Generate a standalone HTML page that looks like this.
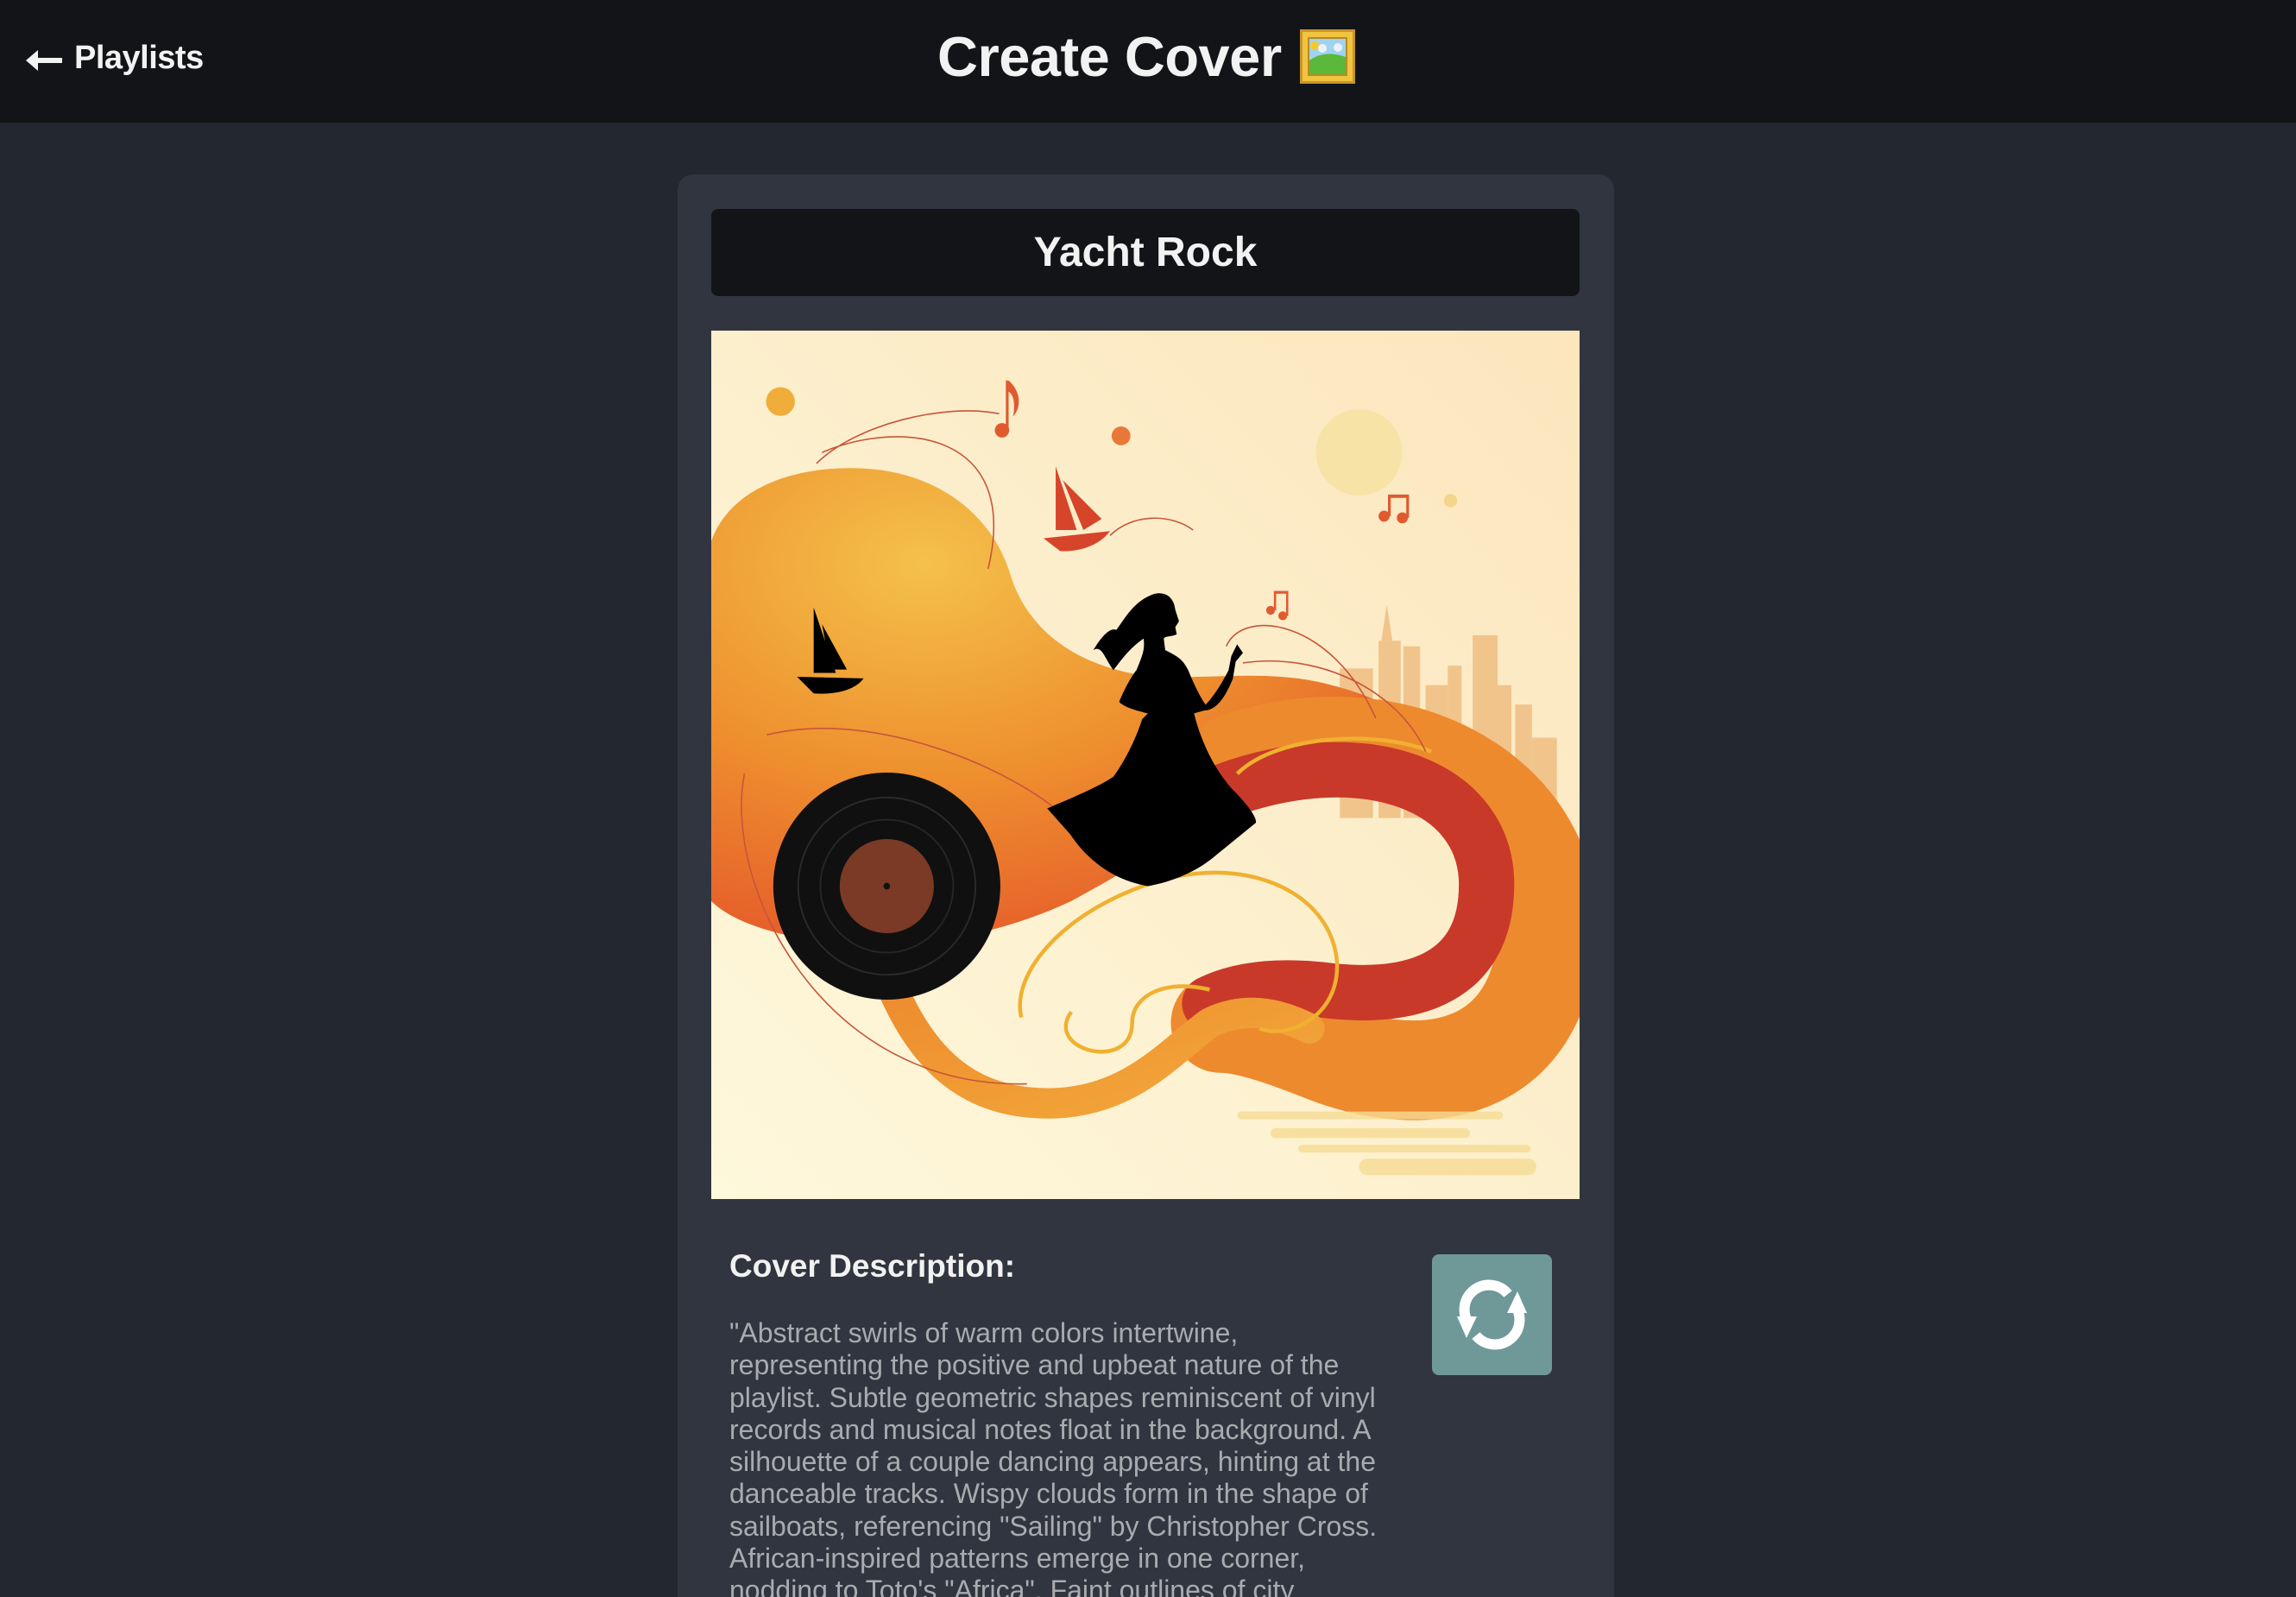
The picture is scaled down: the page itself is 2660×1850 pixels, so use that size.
<!DOCTYPE html>
<html><head><meta charset="utf-8"><style>
*{margin:0;padding:0;box-sizing:border-box}
html,body{width:2660px;height:1850px;overflow:hidden;background:#23272f;font-family:"Liberation Sans",sans-serif;position:relative}
.hdr{position:absolute;left:0;top:0;width:2660px;height:142px;background:#131418}
.back{position:absolute;left:86px;top:46px;color:#f2f2f2;font-weight:bold;font-size:38px;letter-spacing:-0.5px}
.arrow{position:absolute;left:30px;top:56px;width:44px;height:28px}
.title{position:absolute;left:1086px;top:28px;color:#f2f2f2;font-weight:bold;font-size:65px;letter-spacing:-0.5px}
.frame{position:absolute;left:1506px;top:34px;width:64px;height:63px}
.card{position:absolute;left:785px;top:202px;width:1085px;height:1648px;background:#31353f;border-radius:18px 18px 0 0}
.tbar{position:absolute;left:824px;top:242px;width:1006px;height:101px;background:#131418;border-radius:8px;color:#f2f2f2;font-weight:bold;font-size:48px;text-align:center;line-height:101px}
.img{position:absolute;left:824px;top:383px;width:1006px;height:1006px}
.h2{position:absolute;left:845px;top:1446px;color:#f2f2f2;font-weight:bold;font-size:37px}
.desc{position:absolute;left:845px;top:1526px;color:#a9abaf;font-size:32px;line-height:37.3px;white-space:nowrap;letter-spacing:0}
.btn{position:absolute;left:1659px;top:1453px;width:139px;height:140px;background:#6f9899;border-radius:8px}
</style></head><body>
<div class="hdr">
<svg class="arrow" viewBox="0 0 44 28"><path d="M4,14 H42" stroke="#f2f2f2" stroke-width="6"/><path d="M0,14 L14,2 L14,26Z" fill="#f2f2f2"/></svg>
<div class="back">Playlists</div>
<div class="title">Create Cover</div>
<svg class="frame" viewBox="0 0 64 63"><rect x="0" y="0" width="64" height="63" fill="#c9962a"/><rect x="3" y="3" width="58" height="57" fill="#f1c440"/><rect x="9" y="9" width="46" height="45" fill="#b98a22"/><rect x="11" y="11" width="42" height="41" fill="#9fd3ee"/><path d="M11,36 C22,28 36,26 53,32 L53,52 L11,52Z" fill="#5cb83a"/><circle cx="17" cy="19" r="5" fill="#f5c928"/><circle cx="26" cy="22" r="5" fill="#eef2f6"/><circle cx="44" cy="21" r="5" fill="#eef2f6"/></svg>
</div>
<div class="card"></div>
<div class="tbar">Yacht Rock</div>
<svg class="img" viewBox="0 0 1568 1568">
<defs>
<linearGradient id="bg" x1="0" y1="1" x2="1" y2="0"><stop offset="0" stop-color="#fef8dc"/><stop offset="1" stop-color="#fbe6bd"/></linearGradient>
<radialGradient id="blob" cx="0.3" cy="0.2" r="0.9"><stop offset="0" stop-color="#f4c14a"/><stop offset="0.5" stop-color="#ee8f2e"/><stop offset="1" stop-color="#e4532a"/></radialGradient>
<linearGradient id="rib" x1="0" y1="0" x2="1" y2="1"><stop offset="0" stop-color="#ee8a2e"/><stop offset="1" stop-color="#f2a93a"/></linearGradient>
</defs>
<rect width="1568" height="1568" fill="url(#bg)"/>
<circle cx="1170" cy="220" r="78" fill="#f8e3a6"/>
<circle cx="125" cy="128" r="26" fill="#f0ad3a"/>
<circle cx="740" cy="190" r="17" fill="#e8783a"/>
<circle cx="1335" cy="307" r="12" fill="#f5d58a"/>
<g fill="#f1c48c">
<rect x="1135" y="610" width="60" height="270"/><rect x="1205" y="560" width="40" height="320"/><polygon points="1210,560 1220,495 1230,560"/><rect x="1250" y="570" width="30" height="310"/><rect x="1290" y="640" width="40" height="240"/><rect x="1330" y="605" width="25" height="275"/><rect x="1375" y="550" width="45" height="330"/><rect x="1420" y="640" width="25" height="240"/><rect x="1452" y="675" width="30" height="205"/><rect x="1482" y="735" width="45" height="300"/>
</g>
<path d="M0,380 C40,270 180,240 290,250 C420,262 510,340 540,440 C570,540 660,610 800,625 C900,630 1010,610 1120,640 C1200,660 1250,690 1280,720 L1000,820 C900,880 780,960 650,1030 C480,1110 300,1120 180,1100 C90,1085 30,1060 0,1030 Z" fill="url(#blob)"/>
<path d="M950,780 C1250,680 1530,850 1510,1100 C1490,1330 1300,1380 1100,1300 C1000,1260 950,1250 920,1250" fill="none" stroke="#ee8a2e" stroke-width="180" stroke-linecap="round"/>
<path d="M930,830 C1180,740 1400,820 1400,1000 C1400,1180 1250,1210 1100,1190 C1000,1180 940,1195 900,1215" fill="none" stroke="#c8392a" stroke-width="100" stroke-linecap="round"/>
<path d="M320,1170 C380,1320 470,1400 620,1395 C760,1390 830,1300 900,1250 C960,1220 1020,1230 1080,1260" fill="none" stroke="url(#rib)" stroke-width="55" stroke-linecap="round"/>
<g fill="none" stroke="#f0b030" stroke-width="7">
<path d="M560,1240 C540,1160 640,1040 820,990 C980,950 1120,1020 1130,1140 C1135,1240 1040,1280 990,1260"/>
<path d="M650,1230 C600,1300 760,1340 760,1250 C760,1200 820,1170 900,1190"/>
<path d="M950,800 C1020,730 1200,720 1300,760"/>
</g>
<g fill="none" stroke="#c8553a" stroke-width="2.5">
<path d="M190,240 C260,170 420,130 520,150"/><path d="M200,220 C340,160 560,180 500,430"/>
<path d="M720,370 C760,330 830,330 870,360"/>
<path d="M100,730 C300,680 560,800 640,880"/><path d="M60,800 C20,1000 200,1370 570,1360"/>
<path d="M930,570 C960,500 1120,520 1200,700"/><path d="M960,600 C1100,580 1240,650 1290,760"/>
</g>
<circle cx="317" cy="1003" r="205" fill="#101010"/>
<circle cx="317" cy="1003" r="160" fill="none" stroke="#2a2a2a" stroke-width="3"/>
<circle cx="317" cy="1003" r="120" fill="none" stroke="#262626" stroke-width="3"/>
<circle cx="317" cy="1003" r="85" fill="#7a3a26"/>
<circle cx="317" cy="1003" r="6" fill="#111"/>
<g transform="translate(508,369) scale(0.5196)" fill="#000">
<path d="M560,205 C600,195 630,215 635,260 L648,300 L635,320 L640,345 C620,355 600,350 595,360 L600,400 C640,420 660,430 680,470 C700,520 720,560 740,590 C770,560 800,510 820,470 L830,420 L850,380 L870,410 L845,440 L835,500 C810,560 780,610 735,610 L700,620 C720,700 760,800 830,880 C880,930 920,980 915,1000 L780,1110 C700,1180 600,1210 540,1220 C420,1200 330,1130 270,1040 L190,950 C260,920 360,880 420,840 C470,770 500,700 520,640 L540,620 C500,610 460,600 440,580 C460,530 490,480 500,470 C520,420 530,400 525,360 C480,390 450,430 420,470 C390,430 380,380 350,400 C380,350 410,320 430,330 C460,290 490,230 560,205 Z"/>
</g>
<g fill="#000"><path d="M155,625 L275,628 C260,650 220,658 185,655Z"/><path d="M185,500 L185,618 L225,618Z"/><path d="M200,530 L245,612 L215,612Z"/></g>
<g fill="#d6452a"><path d="M600,375 L720,362 C700,390 660,400 630,398Z"/><path d="M622,245 L622,360 L660,360Z"/><path d="M635,270 L705,340 L672,360Z"/></g>
<g fill="#e05a30"><circle cx="525" cy="180" r="13"/><rect x="532" y="90" width="5" height="90"/><path d="M537,90 C560,110 560,140 545,155 C550,130 545,115 537,110Z"/>
<circle cx="1215" cy="335" r="10"/><circle cx="1248" cy="338" r="10"/><rect x="1222" y="298" width="5" height="37"/><rect x="1255" y="300" width="5" height="38"/><rect x="1222" y="296" width="38" height="6"/>
<circle cx="1010" cy="505" r="8"/><circle cx="1032" cy="515" r="8"/><rect x="1016" y="472" width="4" height="33"/><rect x="1038" y="472" width="4" height="43"/><rect x="1016" y="470" width="26" height="5"/></g>
<g fill="#f6dc94" opacity="0.8"><rect x="950" y="1410" width="480" height="14" rx="7"/><rect x="1010" y="1440" width="360" height="18" rx="9"/><rect x="1060" y="1470" width="420" height="14" rx="7"/><rect x="1170" y="1495" width="320" height="30" rx="15"/></g>
</svg>
<div class="h2">Cover Description:</div>
<div class="desc">"Abstract swirls of warm colors intertwine,<br>representing the positive and upbeat nature of the<br>playlist. Subtle geometric shapes reminiscent of vinyl<br>records and musical notes float in the background. A<br>silhouette of a couple dancing appears, hinting at the<br>danceable tracks. Wispy clouds form in the shape of<br>sailboats, referencing "Sailing" by Christopher Cross.<br>African-inspired patterns emerge in one corner,<br>nodding to Toto's "Africa". Faint outlines of city</div>
<div class="btn"><svg width="139" height="140" viewBox="0 0 139 140"><g fill="none" stroke="#fff" stroke-width="12"><path d="M44,82 A28,28 0 0 1 88,46"/><path d="M95,58 A28,28 0 0 1 51,94"/></g><path d="M29,72 L52,72 L40,97Z" fill="#fff"/><path d="M110,68 L87,68 L99,43Z" fill="#fff"/></svg></div>
</body></html>
